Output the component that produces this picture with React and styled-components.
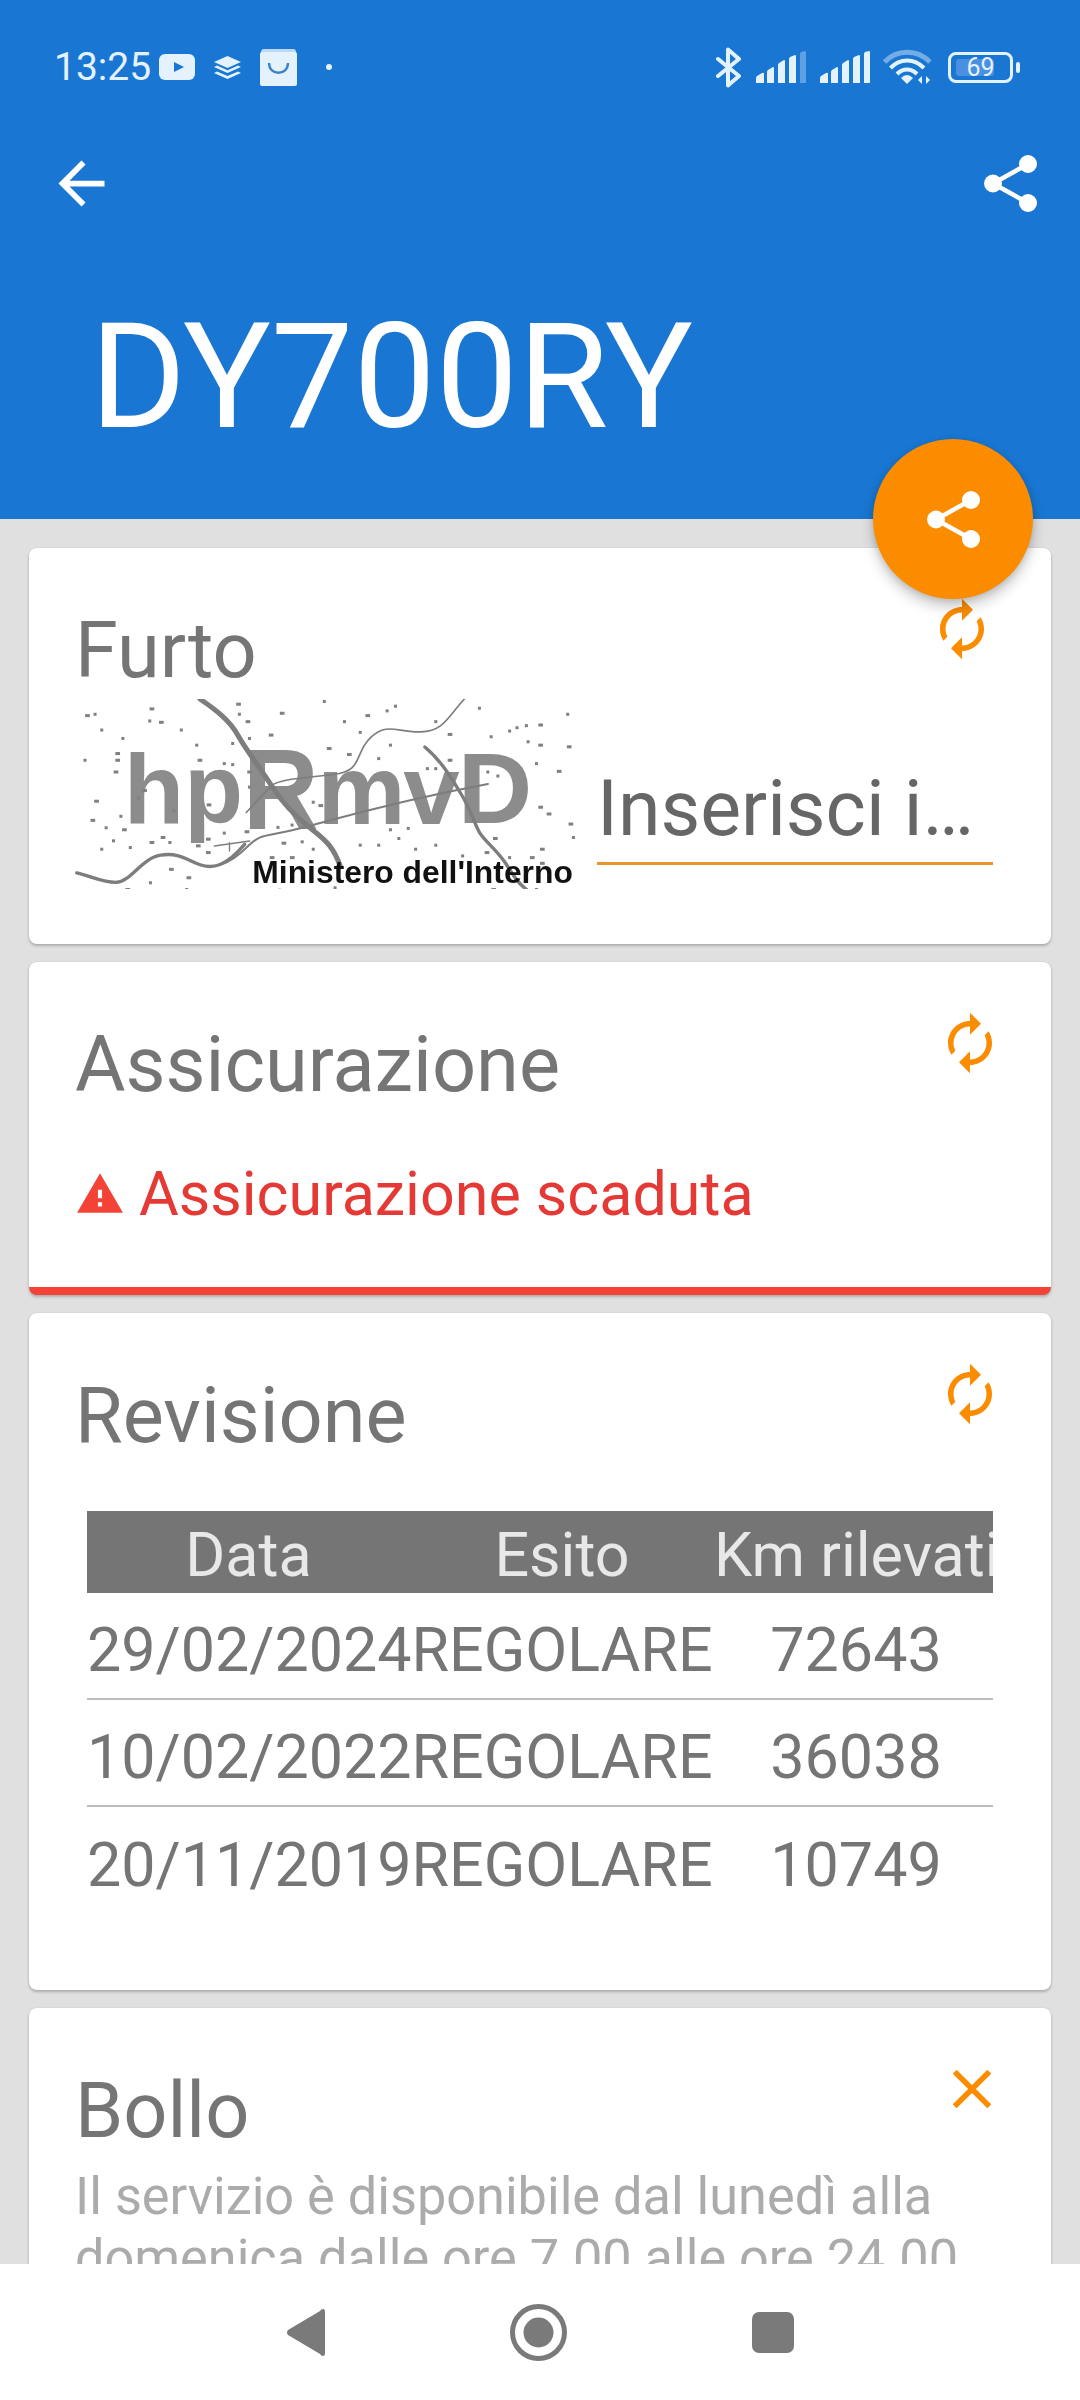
import React from 'react';
import styled, { createGlobalStyle } from 'styled-components';

const GlobalStyle = createGlobalStyle`
  html, body {
    margin: 0;
    padding: 0;
    background: #e0e0e0;
    font-family: Roboto, "Noto Sans", sans-serif;
  }
`;

const Screen = styled.div`
  width: 1080px;
  height: 2400px;
  display: flex;
  flex-direction: column;
  overflow: hidden;
  background: #e0e0e0;
`;

const Header = styled.header`
  position: relative;
  z-index: 2;
  height: 519px;
  flex: none;
  background: #1976d2;
  color: #fff;
`;

const StatusBar = styled.div`
  height: 92px;
  padding: 42px 60px 0 54px;
  display: flex;
  align-items: center;
  justify-content: space-between;
  color: #e3f2fd;
  box-sizing: border-box;
`;

const StatusGroup = styled.div`
  display: flex;
  align-items: center;
`;

const Clock = styled.span`
  font-size: 39px;
  line-height: 44px;
  margin-right: 8px;
`;

const StatusIcon = styled.svg`
  display: block;
  flex: none;
  margin-right: ${p => p.$gap || 0}px;
`;

const Battery = styled.div`
  position: relative;
  width: 65px;
  height: 31px;
  box-sizing: border-box;
  border: 3px solid #e3f2fd;
  border-radius: 8px;
  display: flex;
  align-items: center;
  justify-content: center;
  font-size: 25px;
  color: #e3f2fd;
  &::before {
    content: '';
    position: absolute;
    left: 5px;
    top: 4px;
    bottom: 4px;
    width: 38px;
    border-radius: 3px;
    background: #4a8fe0;
  }
  & span {
    position: relative;
    line-height: 25px;
  }
`;

const BatteryNub = styled.div`
  width: 4px;
  height: 11px;
  margin-left: 3px;
  border-radius: 2px;
  background: #e3f2fd;
`;

const Toolbar = styled.div`
  height: 69px;
  margin-top: 57px;
  padding: 0 43px 0 47px;
  display: flex;
  justify-content: space-between;
  align-items: center;
`;

const ToolbarIcon = styled.svg`
  display: block;
  fill: currentColor;
`;

const Plate = styled.h1`
  margin: 84px 0 0;
  padding-left: 90px;
  font-size: 146.5px;
  line-height: 150px;
  font-weight: 400;
  white-space: nowrap;
`;

const Fab = styled.div`
  position: absolute;
  right: 47px;
  bottom: -80px;
  width: 160px;
  height: 160px;
  border-radius: 50%;
  background: #fb8c00;
  color: #fff;
  display: flex;
  align-items: center;
  justify-content: center;
  box-shadow: 0 8px 14px rgba(0, 0, 0, 0.2), 0 2px 6px rgba(0, 0, 0, 0.12);
`;

const Content = styled.main`
  flex: 1;
  min-height: 0;
  overflow: hidden;
  padding: 29px 29px 0;
  display: flex;
  flex-direction: column;
  gap: 18px;
`;

const Card = styled.section`
  flex: none;
  background: #fff;
  border-radius: 8px;
  padding: 48px 58px ${p => p.$bottom}px 46px;
  box-shadow: 0 2px 3px rgba(0, 0, 0, 0.22), 0 0 2px rgba(0, 0, 0, 0.1);
  border-bottom: ${p => (p.$alert ? '8px solid #f44336' : 'none')};
`;

const CardHead = styled.div`
  display: flex;
  justify-content: space-between;
  align-items: flex-start;
`;

const CardTitle = styled.h2`
  margin: 10px 0 0;
  font-size: 77.5px;
  line-height: 90px;
  font-weight: 400;
  color: #757575;
`;

const ActionIcon = styled.svg`
  display: block;
  flex: none;
  width: 66px;
  height: 66px;
  fill: #fb8c00;
  margin-right: ${p => p.$shift}px;
`;

const CaptchaRow = styled.div`
  display: flex;
  align-items: flex-start;
  margin-top: 3px;
`;

const Captcha = styled.svg`
  display: block;
  flex: none;
  width: 503px;
  height: 190px;
  filter: blur(0.5px);
`;

const FieldBox = styled.div`
  flex: 1;
  margin: 65px 0 0 19px;
  height: 101px;
  box-sizing: border-box;
  border-bottom: 3px solid #e8962a;
  font-size: 77px;
  line-height: 90px;
  color: #666;
  white-space: nowrap;
`;

const AlertRow = styled.div`
  display: flex;
  align-items: center;
  margin-top: 49px;
  gap: 14px;
  color: #e53935;
  font-size: 61px;
  line-height: 70px;
`;

const AlertIcon = styled.svg`
  display: block;
  flex: none;
  width: 50px;
  height: 50px;
  fill: #f44336;
`;

const Table = styled.div`
  margin: 50px 0 0 12px;
  overflow: hidden;
  font-size: 61px;
  color: #757575;
`;

const Row = styled.div`
  display: grid;
  grid-template-columns: 323px 304px 284px;
  height: ${p => (p.$head ? 82 : 107)}px;
  padding-top: ${p => (p.$head ? 6 : 8)}px;
  align-items: center;
  text-align: center;
  white-space: nowrap;
  box-sizing: border-box;
  background: ${p => (p.$head ? '#757575' : 'transparent')};
  color: ${p => (p.$head ? '#e8e8e8' : 'inherit')};
  border-bottom: ${p => (p.$line ? '2px solid #bdbdbd' : 'none')};
`;

const Notice = styled.p`
  margin: 10px 0 0;
  font-size: 52.25px;
  line-height: 62px;
  color: #ababab;
`;

const NavBar = styled.nav`
  position: relative;
  z-index: 1;
  flex: none;
  height: 136px;
  background: #fff;
  display: flex;
  align-items: center;
  justify-content: center;
  gap: 185px;
`;

const NavIcon = styled.svg`
  display: block;
  fill: #7a7a7a;
`;

const Share = ({ size }) => (
  <ToolbarIcon width={size} height={(size * 57) / 53} viewBox="0 0 53 57">
    <path d="M44 9 9 28.5 44 48" fill="none" stroke="currentColor" strokeWidth="4.5" />
    <circle cx="44" cy="9" r="9" />
    <circle cx="9" cy="28.5" r="9" />
    <circle cx="44" cy="48" r="9" />
  </ToolbarIcon>
);

const SyncIcon = ({ shift }) => (
  <ActionIcon viewBox="0 0 24 24" $shift={shift}>
    <g transform="matrix(-1 0 0 1 24 0)">
      <path d="M12 4V1L8 5l4 4V6c3.31 0 6 2.69 6 6 0 1.01-.25 1.97-.7 2.8l1.46 1.46C19.54 15.03 20 13.57 20 12c0-4.42-3.58-8-8-8zm0 14c-3.31 0-6-2.69-6-6 0-1.01.25-1.97.7-2.8L5.24 7.74C4.46 8.97 4 10.43 4 12c0 4.42 3.58 8 8 8v3l4-4-4-4v3z" />
    </g>
  </ActionIcon>
);

const SignalBars = ({ dim, gap }) => (
  <StatusIcon width="50" height="32" viewBox="0 0 50 32" fill="currentColor" $gap={gap}>
    <path d="M0 27q0-1 1-2l5-3q2-1 2 1v9H0z" />
    <path d="M11 21q0-1 1-2l5-3q1 0 1 1v15h-7z" />
    <path d="M22 14q0-1 1-2l5-3q1 0 1 1v22h-7z" />
    <path d="M33 8q0-1 1-2l5-2q1 0 1 1v27h-7z" />
    <path d="M44 3q0-1 1-2l4-1q1 0 1 1v31h-6z" opacity={dim ? 0.35 : 1} />
  </StatusIcon>
);

const specks = [
  [70, 72], [95, 68], [115, 115], [65, 205], [160, 185], [160, 205], [155, 240], [178, 140],
  [262, 52], [258, 88], [290, 92], [352, 115], [398, 160], [405, 205], [520, 38], [548, 90],
  [525, 68], [650, 65], [617, 130], [555, 140], [505, 155], [480, 215], [505, 218], [553, 240],
  [555, 285], [778, 30], [838, 90], [905, 72], [965, 58], [990, 44], [885, 122], [790, 170],
  [850, 188], [940, 200], [975, 160], [1110, 90], [1150, 128], [1240, 50], [1275, 135], [1330, 118],
  [1352, 108], [1380, 102], [1420, 100], [1503, 68], [1420, 160], [1385, 150], [1505, 165], [1410, 215],
  [1475, 238], [1550, 200], [1265, 240], [1295, 252], [1085, 230], [1110, 230], [1150, 205], [1445, 365],
  [1510, 395], [1520, 435], [1420, 345], [1425, 470], [1050, 470], [1110, 458], [975, 412], [1028, 408],
  [1000, 438], [940, 458], [885, 458], [745, 470], [712, 448], [655, 452], [640, 405], [682, 398],
  [545, 418], [480, 422], [430, 440], [400, 460], [318, 450], [295, 435], [262, 450], [200, 465],
  [150, 445], [115, 470], [180, 412], [128, 406], [86, 384], [97, 327], [172, 372], [240, 295],
  [225, 318], [330, 355], [432, 338], [765, 340], [745, 330], [680, 495], [620, 495], [430, 480],
  [320, 530], [372, 555], [368, 590], [260, 570], [190, 590], [1190, 490], [1260, 480], [1285, 438],
  [1330, 495], [1395, 495], [1425, 512], [1280, 590], [1410, 590], [810, 585], [645, 592],
];

const captchaLetters = [
  { ch: 'h', x: 185, y: 395, size: 295, len: 180 },
  { ch: 'p', x: 365, y: 395, size: 295, len: 175 },
  { ch: 'R', x: 540, y: 415, size: 345, len: 225 },
  { ch: 'm', x: 762, y: 400, size: 295, len: 262 },
  { ch: 'v', x: 1018, y: 398, size: 295, len: 168 },
  { ch: 'D', x: 1180, y: 395, size: 300, len: 222 },
];

const CaptchaImage = () => (
  <Captcha viewBox="44 27 1490 566" role="img" aria-label="captcha">
    <rect x="44" y="27" width="1490" height="566" fill="#fff" />
    <g fill="#8c8c8c" fontFamily='"Liberation Sans", Arial, sans-serif' fontWeight="700">
      {captchaLetters.map(l => (
        <text key={l.ch} x={l.x} y={l.y} fontSize={l.size} textLength={l.len} lengthAdjust="spacingAndGlyphs">
          {l.ch}
        </text>
      ))}
    </g>
    <g fill="none" stroke="#7d7d7d" strokeLinecap="round" strokeLinejoin="round">
      <path d="M412 27C460 60 500 90 525 135S590 230 625 285 700 380 745 415 810 470 830 525" strokeWidth="15" />
      <path d="M1082 170C1130 210 1160 260 1190 310S1230 400 1245 425 1300 480 1325 520 1360 575 1385 595" strokeWidth="10" />
      <path d="M45 545C90 555 125 575 165 573S240 500 295 492 370 505 410 520 500 520 550 470 610 440 720 410 1000 330 1270 280" strokeWidth="6" />
      <path d="M45 545C90 555 125 575 165 573S240 500 295 492 370 505 410 520 490 525 545 460" strokeWidth="10" />
      <path d="M550 365 625 285C650 265 720 262 810 252S870 190 920 142 1000 128 1070 125 1150 80 1200 27" strokeWidth="5" />
      <path d="M455 465 560 450M500 455V480" strokeWidth="4" />
    </g>
    <g fill="#808080">
      {specks.map(([x, y]) => (
        <rect key={`${x}-${y}`} x={x} y={y} width={(x * 7) % 11 > 5 ? 14 : 9} height="9" />
      ))}
    </g>
    <text
      x="568"
      y="575"
      fontSize="92"
      fontWeight="700"
      fill="#111"
      fontFamily='"Liberation Sans", Arial, sans-serif'
      textLength="955"
      lengthAdjust="spacingAndGlyphs"
    >
      Ministero dell'Interno
    </text>
  </Captcha>
);

const rows = [
  ['29/02/2024', 'REGOLARE', '72643'],
  ['10/02/2022', 'REGOLARE', '36038'],
  ['20/11/2019', 'REGOLARE', '10749'],
];

export default function App() {
  return (
    <Screen>
      <GlobalStyle />
      <Header>
        <StatusBar>
          <StatusGroup>
            <Clock>13:25</Clock>
            <StatusIcon width="36" height="26" viewBox="0 0 36 26" $gap={19}>
              <rect width="36" height="26" rx="6" fill="#e3f2fd" />
              <path d="M15 8l10 5-10 5z" fill="#1976d2" />
            </StatusIcon>
            <StatusIcon width="27" height="23" viewBox="0 0 27 23" fill="currentColor" $gap={19}>
              <path d="M13.5 0 27 6l-13.5 6L0 6z" />
              <path d="M3 9.5l10.5 4.700L24 9.500 27 11 13.500 17 0 11z" />
              <path d="M3 15.500l10.500 4.500L24 15.500 27 17 13.500 23 0 17z" />
            </StatusIcon>
            <StatusIcon width="37" height="37" viewBox="0 0 37 37" $gap={29}>
              <path d="M4 0h29q3 0 3 3v2H1V3q0-3 3-3z" fill="#bcd8f5" />
              <rect y="3" width="37" height="34" rx="2" fill="#e3f2fd" />
              <path d="M9 14c0 13 19 13 19 0" fill="none" stroke="#3b82cc" strokeWidth="2.400" />
            </StatusIcon>
            <StatusIcon width="6" height="6" viewBox="0 0 6 6" fill="currentColor">
              <circle cx="3" cy="3" r="3" />
            </StatusIcon>
          </StatusGroup>
          <StatusGroup>
            <StatusIcon width="27" height="41" viewBox="0 0 27 41" fill="none" stroke="currentColor" strokeWidth="4" strokeLinecap="round" strokeLinejoin="round" $gap={14}>
              <path d="M3 12l21 17-11 9.500V2.500L24 12 3 29" />
            </StatusIcon>
            <SignalBars dim gap={14} />
            <SignalBars gap={13} />
            <StatusIcon width="49" height="36" viewBox="0 0 49 36" fill="none" stroke="currentColor" strokeWidth="4" $gap={16}>
              <path d="M1.500 13C14 0 34 0 47 13" strokeWidth="5" opacity="0.45" />
              <path d="M7.500 19C17 9 31 9 41 19" />
              <path d="M14 25C20 19 28 19 34 25" />
              <path d="M18 29Q24 23 30 29l-6 6z" fill="currentColor" stroke="none" />
              <path d="M39 27v8l-4-4zM43 35v-8l4 4z" fill="currentColor" stroke="none" />
            </StatusIcon>
            <Battery>
              <span>69</span>
            </Battery>
            <BatteryNub />
          </StatusGroup>
        </StatusBar>
        <Toolbar>
          <ToolbarIcon width="69" height="69" viewBox="0 0 24 24">
            <path d="M20 11H7.830l5.590-5.590L12 4l-8 8 8 8 1.410-1.410L7.830 13H20v-2z" />
          </ToolbarIcon>
          <Share size={53} />
        </Toolbar>
        <Plate>DY700RY</Plate>
        <Fab>
          <Share size={53} />
        </Fab>
      </Header>
      <Content>
        <Card $bottom={55}>
          <CardHead>
            <CardTitle>Furto</CardTitle>
            <SyncIcon shift={-2} />
          </CardHead>
          <CaptchaRow>
            <CaptchaImage />
            <FieldBox>Inserisci i…</FieldBox>
          </CaptchaRow>
        </Card>
        <Card $bottom={58} $alert>
          <CardHead>
            <CardTitle>Assicurazione</CardTitle>
            <SyncIcon shift={-10} />
          </CardHead>
          <AlertRow>
            <AlertIcon viewBox="0 0 24 24">
              <path d="M1 21h22L12 2 1 21zm12-3h-2v-2h2v2zm0-4h-2v-4h2v4z" />
            </AlertIcon>
            Assicurazione scaduta
          </AlertRow>
        </Card>
        <Card $bottom={76}>
          <CardHead>
            <CardTitle>Revisione</CardTitle>
            <SyncIcon shift={-10} />
          </CardHead>
          <Table>
            <Row $head>
              <span>Data</span>
              <span>Esito</span>
              <span>Km rilevati</span>
            </Row>
            {rows.map((row, i) => (
              <Row key={row[0]} $line={i < rows.length - 1}>
                {row.map(cell => (
                  <span key={cell}>{cell}</span>
                ))}
              </Row>
            ))}
          </Table>
        </Card>
        <Card $bottom={48}>
          <CardHead>
            <CardTitle>Bollo</CardTitle>
            <ActionIcon viewBox="0 0 24 24" $shift={-12}>
              <path d="M19 6.410L17.590 5 12 10.590 6.410 5 5 6.410 10.590 12 5 17.590 6.410 19 12 13.410 17.590 19 19 17.590 13.410 12z" />
            </ActionIcon>
          </CardHead>
          <Notice>
            Il servizio è disponibile dal lunedì alla domenica dalle ore 7.00 alle ore 24.00
          </Notice>
        </Card>
      </Content>
      <NavBar>
        <NavIcon width="38" height="47" viewBox="0 0 38 47">
          <path d="M36 0q2 0 2 3v41q0 3-2 3-2 0-3-2L1 26q-2-2.500 0-5L33 2q1-2 3-2z" />
        </NavIcon>
        <NavIcon width="57" height="57" viewBox="0 0 57 57">
          <circle cx="28.500" cy="28.500" r="26" fill="none" stroke="#7a7a7a" strokeWidth="5" />
          <circle cx="28.500" cy="28.500" r="15" />
        </NavIcon>
        <NavIcon width="42" height="41" viewBox="0 0 42 41">
          <rect width="42" height="41" rx="7" />
        </NavIcon>
      </NavBar>
    </Screen>
  );
}
